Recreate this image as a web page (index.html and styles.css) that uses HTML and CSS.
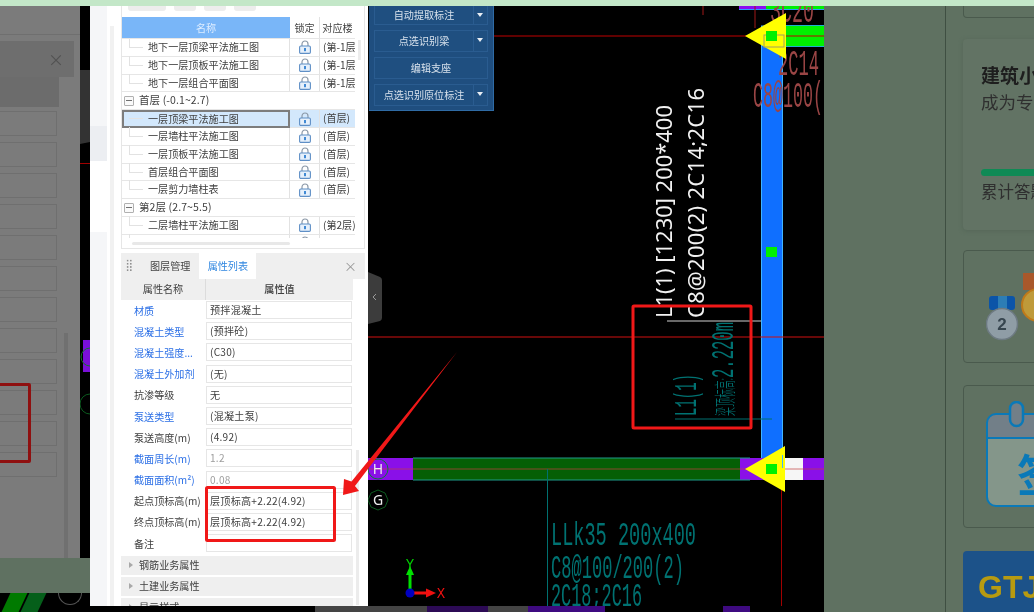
FILE: index.html
```html
<!DOCTYPE html>
<html lang="zh">
<head>
<meta charset="utf-8">
<title>属性列表</title>
<link rel="stylesheet" href="styles.css">
</head>
<body>
<svg class="defs" width="0" height="0" aria-hidden="true">
  <symbol id="lock" viewBox="0 0 12 14">
    <path d="M3 6.5V4a3 3 0 0 1 6 0v2.5" fill="none" stroke="#8c99a8" stroke-width="1.2"/>
    <rect x="0.6" y="6" width="10.8" height="7.4" rx="1.2" fill="#e6f0fb" stroke="#5f8fc6" stroke-width="1.1"/>
    <rect x="5.1" y="8" width="1.8" height="3.2" fill="#2f7fd0"/>
  </symbol>
</svg>
<div class="stage">
  <div class="topbar"></div>

  <!-- dimmed copy of the panel, behind -->
  <section class="ghost">
    <div class="ghost-top"></div>
    <div class="ghost-tabs"><span class="ghost-x">×</span></div>
    <div class="ghost-head"></div>
    <div class="ghost-rows">
      <i></i><i></i><i></i><i></i><i></i><i></i><i></i><i></i><i></i><i></i><i></i><i></i>
    </div>
    <div class="ghost-track"></div>
    <div class="ghost-red"></div>
  </section>
  <svg class="ghost-cad" viewBox="80 0 10 612" width="10" height="612" aria-hidden="true">
    <rect x="80" y="6" width="10" height="552" fill="#000"/>
    <path d="M80 70h10v72l-10 2z" fill="#333"/>
    <rect x="80" y="163" width="10" height="1" fill="#a00000"/>
    <rect x="83" y="340" width="7" height="32" fill="#7a10d8"/>
    <circle cx="90" cy="357" r="9" fill="none" stroke="#0f7a2a"/>
    <circle cx="90" cy="404" r="10" fill="none" stroke="#0b5a1e"/>
  </svg>
  <div class="ghost-foot"><b></b><b></b><u></u></div>

  <!-- drawing canvas -->
  <svg class="cad" viewBox="368 6 456 600" width="456" height="600" role="img" aria-label="CAD">
    <rect x="368" y="6" width="456" height="600" fill="#000"/>
    <path d="M368 272l12 5q2 1 2 3v38q0 2-2 3l-12 3z" fill="#3c3c3c"/>
    <path d="M376 294l-3 3 3 3" fill="none" stroke="#999"/>
    <rect x="739" y="6" width="27" height="3" fill="#8a10f0"/>
    <rect x="766" y="6" width="58" height="3" fill="#00f000"/>
    <rect x="739" y="9" width="85" height="1" fill="#2aa0ff"/>
    <path d="M703 6v9" stroke="#a01818"/>
    <path d="M755 6v22" stroke="#a01818"/>
    <rect x="761.5" y="26" width="21" height="440" fill="#0f6fff" stroke="#40b4ff"/>
    <rect x="785" y="25.5" width="40" height="21" fill="#00f000" stroke="#20b0d0"/>
    <path d="M494 36H824" stroke="#c00000" stroke-width="1"/>
    <path d="M368 337H824" stroke="#d01010" stroke-width="1.200"/>
    <path d="M781.500 470V606" stroke="#a00000"/>
    <text class="pink big" x="770" y="22" textLength="44" lengthAdjust="spacingAndGlyphs">3C20</text>
    <text class="pink big" x="778" y="75" textLength="41" lengthAdjust="spacingAndGlyphs">2C14</text>
    <text class="pink big" x="753" y="107" textLength="70" lengthAdjust="spacingAndGlyphs">C8@100(</text>
    <path d="M745 36L786 13V59z" fill="#ffff00"/>
    <rect x="764" y="35" width="20" height="12" fill="none" stroke="#a0a060"/>
    <rect x="766" y="31" width="11" height="10" fill="#00f000"/>
    <rect x="766" y="247" width="11" height="10" fill="#00f000"/>

    <text class="white" transform="translate(672 318) rotate(-90)" textLength="213">L1(1) [1230] 200*400</text>
    <text class="white" transform="translate(704 318) rotate(-90)" textLength="230">C8@200(2) 2C14;2C16</text>
    <path d="M667 321H761" stroke="#d0d0d0" stroke-width="1.200"/>

    <text class="teal l1" transform="translate(696 416) rotate(-90)" textLength="42" lengthAdjust="spacingAndGlyphs">L1(1)</text>
    <text class="teal lv" transform="translate(733 416) rotate(-90)" textLength="38" lengthAdjust="spacingAndGlyphs">梁顶标高:</text>
    <text class="teal ln" transform="translate(733 378) rotate(-90)" textLength="56" lengthAdjust="spacingAndGlyphs">2.220m</text>
    <path d="M675 419H772" stroke="#007070"/>

    <rect x="368" y="458" width="456" height="22" fill="#8a10e8"/>
    <rect x="413" y="458" width="327" height="22" fill="#055f05"/>
    <path d="M413 458H750M413 480H750" stroke="#1f9a8a"/>
    <rect x="785" y="458" width="18" height="22" fill="#f6f6f6"/>
    <path d="M368 469H824" stroke="#c04040" stroke-opacity=".7"/>
    <path d="M745 469L785 446V492z" fill="#ffff00"/>
    <rect x="766" y="464" width="11" height="10" fill="#00f000"/>
    <path d="M782.500 455V468" stroke="#40b4ff"/>
    <circle cx="378" cy="469" r="10" fill="none" stroke="#0d7a3a"/>
    <text class="label" x="378" y="474" text-anchor="middle">H</text>
    <path d="M378 490l7 3 3 7-3 7-7 3-7-3-3-7 3-7z" fill="none" stroke="#0b5a1e"/>
    <text class="label" x="378" y="505" text-anchor="middle">G</text>

    <path d="M547.500 469V606" stroke="#007070"/>
    <text class="teal ll" x="551" y="545" textLength="145" lengthAdjust="spacingAndGlyphs">LLk35 200x400</text>
    <text class="teal ll" x="551" y="578" textLength="133" lengthAdjust="spacingAndGlyphs">C8@100/200(2)</text>
    <text class="teal ll" x="551" y="606" textLength="91" lengthAdjust="spacingAndGlyphs">2C18;2C16</text>

    <path d="M410 593V570" stroke="#00e000" stroke-width="3"/>
    <path d="M410 566l-4 9h8z" fill="#00e000"/>
    <path d="M410 593H428" stroke="#f01010" stroke-width="3"/>
    <path d="M436 593l-10-4.500v9z" fill="#f01010"/>
    <circle cx="410" cy="593" r="4.500" fill="#0000c0"/>
    <text class="axis y" x="410" y="569" text-anchor="middle">Y</text>
    <text class="axis x" x="441" y="598" text-anchor="middle">X</text>
  </svg>

  <!-- blue recognition toolbar -->
  <nav class="tools">
    <div class="tool"><span class="tool-name">自动提取标注</span><span class="tool-drop"></span></div>
    <div class="tool"><span class="tool-name">点选识别梁</span><span class="tool-drop"></span></div>
    <div class="tool"><span class="tool-name">编辑支座</span></div>
    <div class="tool"><span class="tool-name">点选识别原位标注</span><span class="tool-drop"></span></div>
  </nav>

  <div class="strip">
    <b class="s-gray1"></b><b class="s-purple1"></b><b class="s-gray2"></b><b class="s-purple2"></b><b class="s-black"></b><b class="s-purple3"></b>
  </div>

  <!-- left software panel -->
  <aside class="panel">
    <div class="gutter">
      <div class="gutter-left">
        <div class="g-a"></div><div class="g-b"></div><div class="g-c"></div><div class="g-d"></div>
      </div>
      <div class="gutter-track"></div>
    </div>
    <div class="panel-main">
      <section class="tree">
        <div class="tree-tools"><i class="wide"></i><i></i><i></i><i></i></div>
        <div class="tree-grid">
          <div class="tree-head">
            <div class="c-name">名称</div><div class="c-lock">锁定</div><div class="c-floor">对应楼</div>
          </div>
          <div class="tree-body">
            <div class="t-row"><div class="c-name leaf">地下一层顶梁平法施工图</div><div class="c-lock"><svg class="lock"><use href="#lock"/></svg></div><div class="c-floor">(第-1层</div></div>
            <div class="t-row"><div class="c-name leaf">地下一层顶板平法施工图</div><div class="c-lock"><svg class="lock"><use href="#lock"/></svg></div><div class="c-floor">(第-1层</div></div>
            <div class="t-row"><div class="c-name leaf">地下一层组合平面图</div><div class="c-lock"><svg class="lock"><use href="#lock"/></svg></div><div class="c-floor">(第-1层</div></div>
            <div class="t-group"><span class="minus"></span>首层 (-0.1~2.7)</div>
            <div class="t-row sel"><div class="c-name leaf">一层顶梁平法施工图</div><div class="c-lock"><svg class="lock"><use href="#lock"/></svg></div><div class="c-floor">(首层)</div></div>
            <div class="t-row"><div class="c-name leaf">一层墙柱平法施工图</div><div class="c-lock"><svg class="lock"><use href="#lock"/></svg></div><div class="c-floor">(首层)</div></div>
            <div class="t-row"><div class="c-name leaf">一层顶板平法施工图</div><div class="c-lock"><svg class="lock"><use href="#lock"/></svg></div><div class="c-floor">(首层)</div></div>
            <div class="t-row"><div class="c-name leaf">首层组合平面图</div><div class="c-lock"><svg class="lock"><use href="#lock"/></svg></div><div class="c-floor">(首层)</div></div>
            <div class="t-row"><div class="c-name leaf">一层剪力墙柱表</div><div class="c-lock"><svg class="lock"><use href="#lock"/></svg></div><div class="c-floor">(首层)</div></div>
            <div class="t-group"><span class="minus"></span>第2层 (2.7~5.5)</div>
            <div class="t-row"><div class="c-name leaf">二层墙柱平法施工图</div><div class="c-lock"><svg class="lock"><use href="#lock"/></svg></div><div class="c-floor">(第2层)</div></div>
            <div class="t-row"><div class="c-name leaf">二层剪力墙柱表</div><div class="c-lock"><svg class="lock"><use href="#lock"/></svg></div><div class="c-floor">(第2层)</div></div>
          </div>
          <div class="tree-vthumb"></div>
        </div>
        <div class="tree-hbar"><i></i></div>
      </section>

      <section class="props">
        <div class="tabs">
          <span class="grip"></span>
          <span class="tab">图层管理</span>
          <span class="tab active">属性列表</span>
          <span class="close">×</span>
        </div>
        <div class="p-head"><div class="p-hname">属性名称</div><div class="p-hval">属性值</div></div>
        <div class="p-row"><div class="p-name link">材质</div><div class="p-val">预拌混凝土</div></div>
        <div class="p-row"><div class="p-name link">混凝土类型</div><div class="p-val">(预拌砼)</div></div>
        <div class="p-row"><div class="p-name link">混凝土强度...</div><div class="p-val">(C30)</div></div>
        <div class="p-row"><div class="p-name link">混凝土外加剂</div><div class="p-val">(无)</div></div>
        <div class="p-row"><div class="p-name">抗渗等级</div><div class="p-val">无</div></div>
        <div class="p-row"><div class="p-name link">泵送类型</div><div class="p-val">(混凝土泵)</div></div>
        <div class="p-row"><div class="p-name">泵送高度(m)</div><div class="p-val">(4.92)</div></div>
        <div class="p-row"><div class="p-name link">截面周长(m)</div><div class="p-val muted">1.2</div></div>
        <div class="p-row"><div class="p-name link">截面面积(m²)</div><div class="p-val muted">0.08</div></div>
        <div class="p-row"><div class="p-name">起点顶标高(m)</div><div class="p-val">层顶标高+2.22(4.92)</div></div>
        <div class="p-row"><div class="p-name">终点顶标高(m)</div><div class="p-val">层顶标高+2.22(4.92)</div></div>
        <div class="p-row"><div class="p-name">备注</div><div class="p-val"></div></div>
        <div class="p-sec">钢筋业务属性</div>
        <div class="p-sec">土建业务属性</div>
        <div class="p-sec">显示样式</div>
        <div class="p-thumb"></div>
      </section>
    </div>
  </aside>
  <div class="under"><b></b></div>

  <!-- dimmed web page on the right -->
  <section class="web">
    <div class="web-rule"></div>
    <div class="web-col">
      <div class="card stub"></div>
      <div class="card level">
        <div class="level-title">建筑小白</div>
        <div class="level-sub">成为专业人士</div>
        <div class="level-bar"></div>
        <div class="level-note">累计答题数</div>
      </div>
      <div class="card medals">
        <svg class="medal-svg" viewBox="0 0 71 70" width="71" height="70" aria-hidden="true">
          <rect x="3" y="23" width="26" height="14" rx="3" fill="#0b54a8"/>
          <rect x="12" y="23" width="9" height="14" fill="#2d7db5"/>
          <circle cx="16" cy="51" r="15.500" fill="#8f9da6" stroke="#6d7a82" stroke-width="1.500"/>
          <text class="medal-num" x="16" y="57" text-anchor="middle">2</text>
          <rect x="37" y="0" width="24" height="17" fill="#a9582b"/>
          <circle cx="52" cy="32" r="16" fill="#bf9a3a" stroke="#bf7a1a" stroke-width="2"/>
        </svg>
      </div>
      <div class="card sign">
        <svg class="cal-svg" viewBox="0 0 48 106" width="48" height="106" aria-hidden="true">
          <path d="M48 105H10a9 9 0 0 1-9-9V22a9 9 0 0 1 9-9h38z" fill="#84968a"/>
          <path d="M1 37V22a9 9 0 0 1 9-9h38v24z" fill="#727f88"/>
          <path d="M48 105H10a9 9 0 0 1-9-9V22a9 9 0 0 1 9-9h38M1 37h47" fill="none" stroke="#0a79b8" stroke-width="2"/>
          <rect x="24" y="1" width="13" height="24" rx="6.500" fill="#727f88" stroke="#0a79b8" stroke-width="2.500"/>
          <text class="cal-text" x="31" y="91">签</text>
        </svg>
      </div>
      <div class="card gtj"><span>GTJ</span></div>
    </div>
  </section>

  <!-- hand-drawn red annotations -->
  <svg class="marks" viewBox="0 0 1034 612" width="1034" height="612" aria-hidden="true">
    <rect x="633" y="306" width="118" height="122" rx="1" fill="none" stroke="#f01818" stroke-width="3"/>
    <rect x="206.500" y="487.500" width="128" height="53" rx="1" fill="none" stroke="#f01818" stroke-width="3"/>
    <path d="M457 352L351.500 481.500 344 479 343 495 359 491 355 486z" fill="#f01818"/>
  </svg>
</div>
</body>
</html>
```

FILE: styles.css
```css
* { box-sizing: border-box; }
html, body { margin: 0; padding: 0; overflow: hidden; }
body { background: #5f7161; font-family: "Noto Sans CJK SC", "Noto Sans", sans-serif; }
.defs { position: absolute; }
.stage { position: relative; width: 1034px; height: 612px; overflow: hidden; background: #5f7161; filter: blur(.35px); }
.topbar { position: absolute; left: 0; top: 0; width: 1034px; height: 6px; background: #c3e7c8; z-index: 10; }

/* dimmed window, left */
.ghost { position: absolute; left: 0; top: 6px; width: 80px; height: 552px; background: #7b7b7b; color: #5a5a5a; }
.ghost-top { height: 29px; border-bottom: 1px solid #6f6f6f; }
.ghost-tabs { height: 36px; margin-top: 6px; background: #6e6e6e; margin-right: 6px; position: relative; }
.ghost-x { position: absolute; right: 10px; top: 3px; font-size: 16px; line-height: 30px; color: #525252; }
.ghost-head { width: 59px; height: 30px; background: #6c6c6c; }
.ghost-rows { display: flex; flex-direction: column; gap: 6px; padding-top: 4px; width: 57px; }
.ghost-rows i { display: block; height: 25px; border: 1px solid #6f6f6f; border-left: 0; flex: none; }
.ghost-track { position: absolute; left: 64px; top: 327px; width: 4px; height: 225px; background: #707070; }
.ghost-red { position: absolute; left: -6px; top: 377px; width: 37px; height: 80px; border: 3px solid #8f1010; border-radius: 2px; }
.ghost-cad { position: absolute; left: 80px; top: 0; }
.ghost-foot { position: absolute; left: 0; top: 593px; width: 90px; height: 19px; background: #000; display: flex; padding-left: 6px; gap: 2px; }
.ghost-foot b { width: 17px; height: 19px; background: #007a00; transform: skewX(-25deg); }
.ghost-foot b + b { background: #055f1a; }
.ghost-foot u { width: 24px; height: 12px; margin-left: 14px; border: 1px solid #555; border-top: 0; border-radius: 0 0 14px 14px; }

/* canvas */
.cad { position: absolute; left: 368px; top: 6px; display: block; }
.cad text { font-family: "Liberation Sans", sans-serif; }
.cad .pink { fill: #9a4545; font-family: "Liberation Mono", monospace; font-size: 20px; }
.cad .pink.big { font-size: 36px; font-weight: 400; }
.cad .white { fill: #f2f2f2; font-family: "Noto Sans", sans-serif; font-size: 22px; }
.cad .teal { fill: #007272; font-family: "Liberation Mono", "Noto Sans CJK SC", monospace; }
.cad .teal.l1 { font-size: 32px; }
.cad .teal.lv { font-size: 22px; font-family: "Noto Sans CJK SC", sans-serif; font-weight: 300; }
.cad .teal.ln { font-size: 32px; }
.cad .teal.ll { font-size: 34px; }
.cad .label { fill: #eee; font-family: "Noto Sans", sans-serif; font-size: 14px; }
.cad .axis { font-family: "Liberation Mono", monospace; font-size: 14px; }
.cad .axis.y { fill: #00d000; }
.cad .axis.x { fill: #f01010; }

/* blue toolbar */
.tools { position: absolute; left: 369px; top: 6px; width: 125px; height: 105px; background: #1f4e7f; border-right: 1px solid #2f6ba5; border-bottom: 1px solid #2f6ba5; padding: 0 5px; display: flex; flex-direction: column; gap: 5.500px; }
.tool { height: 21.500px; flex: none; display: flex; border: 1px solid #2a5c90; background: #1f4f80; color: #d8e2ec; font-size: 10.100px; line-height: 19.500px; text-align: center; }
.tool:first-child { height: 18.500px; border-top: 0; line-height: 18px; }
.tool-name { flex: 1; }
.tool-drop { width: 14px; border-left: 1px solid #2a5c90; position: relative; }
.tool-drop::after { content: ""; position: absolute; left: 3px; top: 7px; border: 3.500px solid transparent; border-top: 4px solid #e8eef4; }

.strip { position: absolute; left: 368px; top: 606px; width: 456px; height: 6px; display: flex; background: #000; }
.strip b { display: block; height: 6px; }
.s-gray1 { width: 59px; background: #444; }
.s-purple1 { width: 61px; background: #2c0a55; }
.s-gray2 { width: 40px; background: #444; }
.s-purple2 { width: 77px; background: #3e0a80; }
.s-black { width: 118px; background: #000; }
.s-purple3 { width: 27px; background: #3e0a80; }

/* side panel */
.panel { position: absolute; left: 90px; top: 6px; width: 278px; height: 600px; background: #fff; display: flex; color: #404040; font-size: 10.100px; }
.gutter { width: 31px; flex: none; display: flex; }
.gutter-left { width: 17px; display: flex; flex-direction: column; background: #f5f6f8; }
.g-a { height: 120px; }
.g-b { height: 35px; background: #eceef2; }
.g-c { height: 71px; background: #fff; }
.g-d { flex: 1; }
.gutter-track { width: 4px; margin: 20px 0 0 3px; background: #f1f1f1; }
.panel-main { width: 244px; display: flex; flex-direction: column; gap: 4px; }

.tree { height: 243px; border: 1px solid #e6e6e6; border-top: 0; display: flex; flex-direction: column; flex: none; }
.tree-tools { height: 11px; display: flex; gap: 8px; flex: none; padding-left: 6px; }
.tree-tools i { width: 22px; height: 5px; background: #ededed; border-radius: 0 0 3px 3px; }
.tree-tools i.wide { width: 38px; }
.tree-grid { position: relative; width: 242px; flex: none; }
.tree-head { display: flex; height: 22px; width: 233px; line-height: 21px; text-align: center; border-bottom: 1px solid #e6e6e6; }
.tree-head .c-name { background: #79b6f8; color: #dcecff; border: 0; padding: 0; }
.tree-head .c-floor { padding: 0; overflow: hidden; white-space: nowrap; }
.tree-body { height: 199px; width: 233px; overflow: hidden; }
.c-name { width: 168px; flex: none; border-right: 1px solid #e2e2e2; position: relative; }
.c-lock { width: 30px; flex: none; border-right: 1px solid #e2e2e2; display: flex; align-items: center; justify-content: center; }
.c-floor { flex: 1; padding-left: 3px; white-space: nowrap; overflow: hidden; }
.lock { width: 12px; height: 14px; display: block; }
.t-row { display: flex; height: 17.800px; line-height: 16.800px; border-bottom: 1px solid #e6e6e6; }
.leaf { padding-left: 26px; }
.leaf::before { content: ""; position: absolute; left: 7px; top: 8px; width: 14px; border-top: 1px solid #e2e2e2; }
.leaf::after { content: ""; position: absolute; left: 7px; top: -1px; height: 10px; border-left: 1px solid #e2e2e2; }
.t-group { height: 17.800px; line-height: 16.800px; border-bottom: 1px solid #e6e6e6; display: flex; align-items: center; gap: 5px; padding-left: 2px; font-size: 10.500px; letter-spacing: .1px; }
.minus { width: 10px; height: 10px; border: 1px solid #b0b0b0; border-radius: 1px; position: relative; flex: none; background: #fafafa; }
.minus::after { content: ""; position: absolute; left: 1px; right: 1px; top: 3px; border-top: 1px solid #707070; }
.sel { background: #d3e8fc; }
.sel .c-name { border: 2px solid #7d7d7d; height: 18px; line-height: 14px; padding-left: 24px; width: 168px; }
.sel .c-name::before { left: 5px; top: 6px; }
.sel .c-name::after { display: none; }
.tree-vthumb { position: absolute; right: 3px; top: 23px; width: 3px; height: 20px; background: #ececec; }
.tree-hbar { flex: 1; padding: 4px 0 0 10px; }
.tree-hbar i { display: block; width: 158px; height: 3px; background: #e8e8e8; border-radius: 2px; }

.props { position: relative; flex: 1; display: flex; flex-direction: column; border-top: 0; min-height: 0; overflow: hidden; }
.tabs { height: 26px; flex: none; background: #efefef; display: flex; align-items: center; position: relative; padding-left: 29px; }
.grip { position: absolute; left: 5px; top: 6px; width: 6px; height: 13px; background-image: radial-gradient(#909090 1px, transparent 1.200px); background-size: 3.200px 3.200px; }
.tab { height: 26px; line-height: 26px; padding: 0 9px 0 0; color: #444; margin-right: 0; }
.tab.active { background: #fff; color: #2f86e0; padding: 0 8px; margin-left: 0; width: 57px; text-align: center; }
.close { position: absolute; right: 8px; top: 0; font-size: 13px; line-height: 26px; color: #9a9a9a; }
.p-head { height: 20.500px; flex: none; display: flex; width: 232px; background: #efefef; line-height: 20px; text-align: center; font-weight: 500; }
.p-hname { width: 85px; border-right: 1px solid #dcdcdc; font-weight: 400; }
.p-hval { flex: 1; }
.p-row { height: 21.200px; flex: none; display: flex; align-items: center; width: 232px; }
.p-name { width: 85px; flex: none; padding-left: 13px; white-space: nowrap; overflow: visible; }
.p-name.link { color: #2b6fe6; }
.p-val { width: 146px; height: 18px; line-height: 16px; border: 1px solid #e6e6e6; padding-left: 3px; white-space: nowrap; letter-spacing: .25px; }
.p-val.muted { color: #9e9e9e; }
.p-sec { height: 19px; margin-top: 2px; flex: none; width: 232px; background: #efefef; line-height: 18px; padding-left: 18px; position: relative; }
.p-sec::before { content: ""; position: absolute; left: 8px; top: 6px; border: 3px solid transparent; border-left: 4px solid #a8a8a8; }
.p-thumb { position: absolute; right: 6px; top: 197px; width: 3px; height: 155px; background: #ececec; }
.under { position: absolute; left: 90px; top: 606px; width: 278px; height: 6px; background: #000; display: flex; justify-content: flex-end; }
.under b { width: 53px; background: #444; }

/* dimmed page, right */
.web { position: absolute; left: 824px; top: 0; width: 210px; height: 612px; overflow: hidden; display: flex; }
.web-rule { margin-left: 121px; width: 1px; background: #3f4f42; height: 612px; flex: none; }
.web-col { margin-left: 17px; width: 220px; flex: none; display: flex; flex-direction: column; }
.card { border: 1px solid #4a5a4d; border-radius: 4px; flex: none; position: relative; }
.stub { height: 18px; margin-bottom: 21px; border-top: 0; }
.level { height: 191px; margin-bottom: 20px; background: #627364; border: 0; box-shadow: 0 1px 4px #556658; padding: 23px 0 0 18px; color: #222; }
.level-title { font-size: 19px; font-weight: 700; line-height: 26px; white-space: nowrap; color: #1e1e1e; }
.level-sub { font-size: 17.500px; line-height: 27px; white-space: nowrap; color: #2f2f2f; }
.level-bar { width: 200px; height: 7px; border-radius: 4px; background: #0f8a55; margin-top: 54px; }
.level-note { font-size: 16.500px; line-height: 24px; margin-top: 3px; white-space: nowrap; color: #2f2f2f; }
.medals { height: 113px; margin-bottom: 22px; padding: 22px 0 0 22px; }
.medal-svg { display: block; }
.medal-num { fill: #36454f; font-family: "Liberation Sans", sans-serif; font-weight: 700; font-size: 17px; }
.sign { height: 143px; margin-bottom: 23px; padding: 15px 0 0 22px; }
.cal-svg { display: block; }
.cal-text { fill: #0a79b8; font-family: "Noto Sans CJK SC", sans-serif; font-weight: 700; font-size: 44px; }
.gtj { height: 70px; background: #1c5289; border: 0; padding: 18px 0 0 15px; color: #b79a10; font-family: "Liberation Sans", sans-serif; font-weight: 700; font-size: 32px; line-height: 36px; white-space: nowrap; }

.marks { position: absolute; left: 0; top: 0; z-index: 5; pointer-events: none; }
```
